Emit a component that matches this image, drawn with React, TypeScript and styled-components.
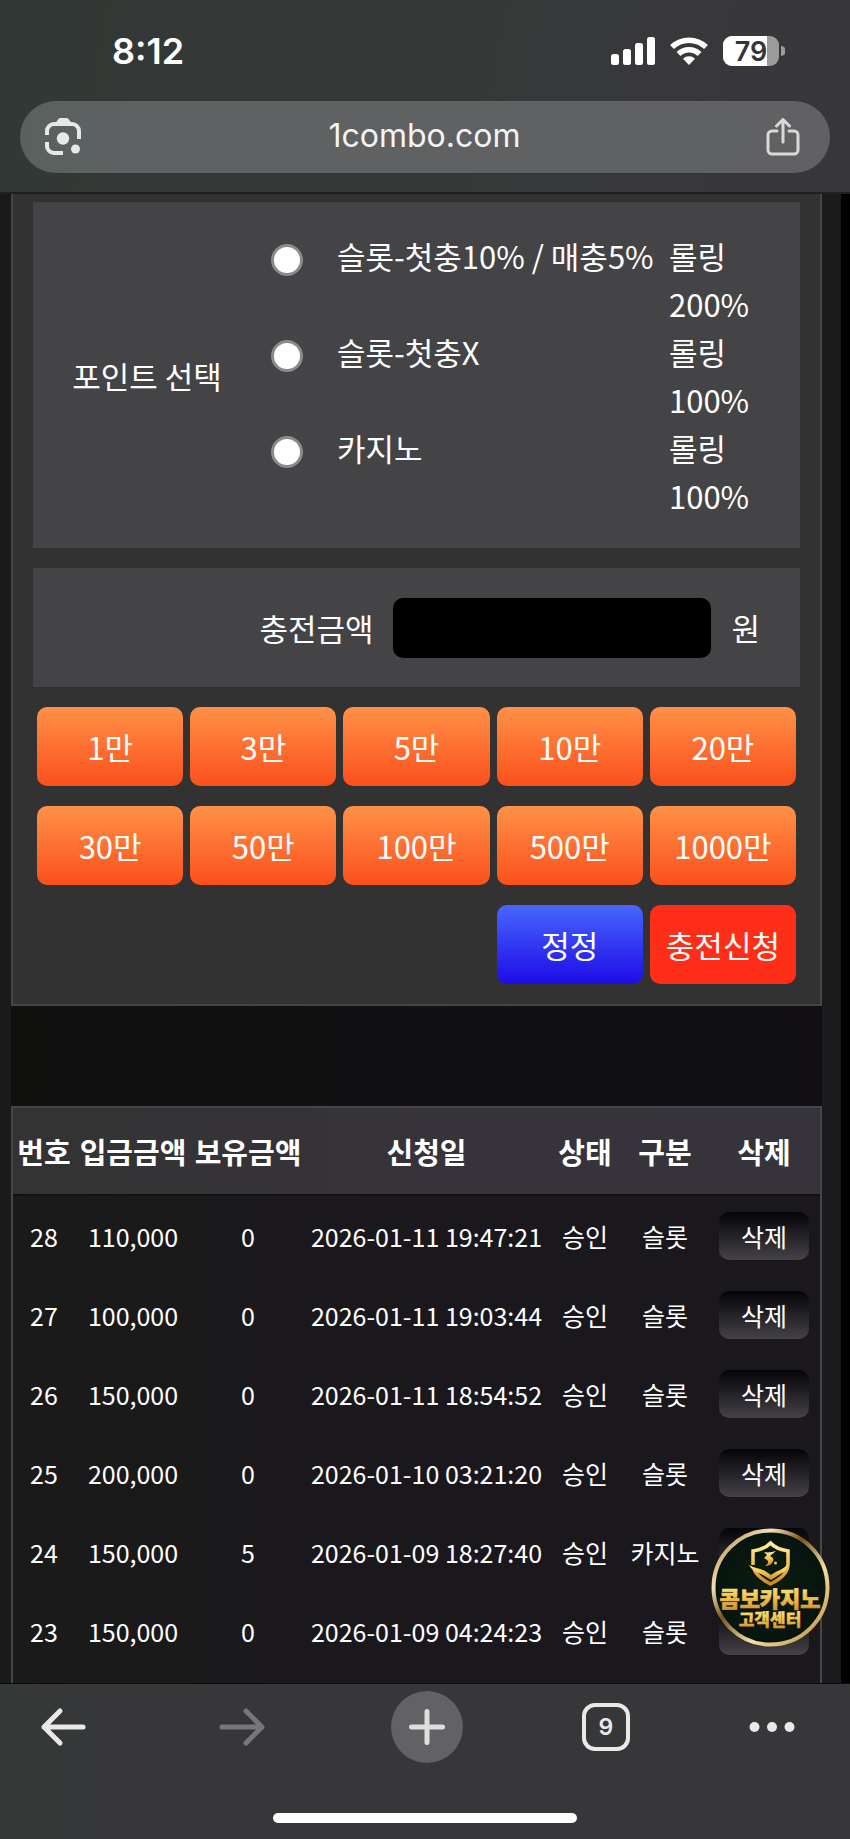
import React, { useState } from "react";
import styled, { createGlobalStyle } from "styled-components";

const KR = `"Noto Sans CJK KR", "Noto Sans", sans-serif`;
const UI = `Inter, "Noto Sans CJK KR", sans-serif`;

const GlobalStyle = createGlobalStyle`
  *, *::before, *::after { box-sizing: border-box; }
  body { margin: 0; background: #000; color: #fff; font-family: ${KR}; }
  button, input { font: inherit; color: inherit; }
  button { border: 0; padding: 0; background: none; cursor: pointer; }
`;

const Screen = styled.div`
  display: flex;
  flex-direction: column;
  height: 100vh;
  overflow: hidden;
`;

const Chrome = styled.header`
  flex: none;
  padding: 0 20px 19px;
  background: linear-gradient(100deg, #323835 0%, #353837 35%, #38383a 75%, #373739 100%);
  border-bottom: 2px solid #1f2020;
`;

const StatusBar = styled.div`
  display: flex;
  align-items: center;
  justify-content: space-between;
  height: 101px;
  padding: 0 45px 0 92px;
`;

const Clock = styled.time`
  font: 600 36px/40px ${UI};
`;

const StatusIcons = styled.div`
  display: flex;
  align-items: center;
  gap: 15px;
`;

const AddressBar = styled.div`
  display: flex;
  align-items: center;
  justify-content: space-between;
  height: 72px;
  padding: 0 30px 0 25px;
  border-radius: 36px;
  background: linear-gradient(90deg, #59615f 0%, #5f6163 14%, #616163 100%);
`;

const Address = styled.a`
  padding-bottom: 2px;
  font: 400 32px/40px ${UI};
  color: #f4f4f4;
  text-decoration: none;
`;

const IconButton = styled.button`
  display: flex;
  align-items: center;
  justify-content: center;
`;

const Viewport = styled.main`
  flex: 1;
  min-height: 0;
  overflow: hidden;
  margin-right: 9px;
  padding: 0 19px 0 11px;
  background: linear-gradient(90deg, #1a1a1a, #1b1b1d);
`;

const Page = styled.div`
  background: linear-gradient(90deg, #10100f, #110f14);
`;

const DepositForm = styled.form`
  display: flex;
  flex-direction: column;
  gap: 20px;
  padding: 8px 20px 20px;
  border: 2px solid #464648;
  border-top: 0;
  background: #323233;
  font-size: 31px;
  line-height: 48px;
`;

const PointBox = styled.fieldset`
  display: grid;
  grid-template-columns: 228px 1fr;
  align-items: center;
  margin: 0;
  padding: 30px 39px 28px 0;
  border: 0;
  background: #444446;
`;

const PointTitle = styled.div`
  text-align: center;
`;

const PointOptions = styled.div`
  display: flex;
  flex-direction: column;
`;

const PointOption = styled.label`
  display: grid;
  grid-template-columns: 76px 1fr 92px;
  align-items: start;
`;

const Radio = styled.input`
  appearance: none;
  width: 32px;
  height: 32px;
  margin: 12px 10px;
  border: 3px solid #8b8b8d;
  border-radius: 50%;
  background: #fff;
  &:checked { border: 9px solid #2b6cf6; }
`;

const AmountBox = styled.div`
  display: flex;
  align-items: center;
  justify-content: flex-end;
  gap: 20px;
  height: 119px;
  padding-right: 40px;
  background: #444446;
`;

const AmountInput = styled.input`
  width: 318px;
  height: 60px;
  padding: 0 16px;
  border: 0;
  border-radius: 10px;
  background: #000;
  text-align: right;
`;

const ButtonGrid = styled.div`
  display: grid;
  grid-template-columns: repeat(5, 1fr);
  gap: 20px 7px;
  padding: 0 4px;
`;

const fills = {
  amount: "linear-gradient(#ff9147, #fb501c)",
  reset: "linear-gradient(#4866fc, #1d0ce6)",
  submit: "#ff2e18",
};

const FormButton = styled.button<{ $kind: keyof typeof fills }>`
  height: 79px;
  border-radius: 10px;
  background: ${(p) => fills[p.$kind]};
  white-space: nowrap;
  ${(p) => p.$kind === "reset" && "grid-column: 4;"}
`;

const History = styled.table`
  width: 100%;
  margin-top: 100px;
  border: 2px solid #464648;
  border-collapse: separate;
  border-spacing: 0;
  table-layout: fixed;
  background: linear-gradient(90deg, #1a1a19, #1b181d 50%);
  font-size: 25px;
  line-height: 36px;
  text-align: center;
  white-space: nowrap;
`;

const HeadCell = styled.th`
  height: 88px;
  padding: 0;
  border-bottom: 2px solid #111012;
  font-size: 29px;
  font-weight: 700;
`;

const HeadRow = styled.tr`
  background: linear-gradient(90deg, #333333, #37333a 50%);
`;

const Cell = styled.td`
  height: 79px;
  padding: 0;
`;

const DeleteButton = styled.button`
  display: block;
  width: 90px;
  height: 48px;
  margin: 0 auto;
  border-radius: 10px;
  background: linear-gradient(#040307, #444246);
`;

const Toolbar = styled.nav`
  position: relative;
  flex: none;
  padding: 7px 55px 16px 32px;
  border-top: 1px solid #0c0c0c;
  background: linear-gradient(90deg, #343936, #373739 12%);
`;

const ToolbarButtons = styled.div`
  display: flex;
  align-items: center;
  justify-content: space-between;
  height: 72px;
`;

const NewTab = styled(IconButton)`
  width: 72px;
  height: 72px;
  border-radius: 50%;
  background: #626264;
`;

const TabCount = styled(IconButton)`
  width: 48px;
  height: 48px;
  border: 4px solid #e9e9ea;
  border-radius: 13px;
  font: 600 23px/28px ${UI};
  color: #e9e9ea;
`;

const HomeBar = styled.div`
  display: flex;
  justify-content: center;
  margin: 50px -55px 0 -32px;
`;

const HomeIndicator = styled.div`
  width: 304px;
  height: 10px;
  border-radius: 5px;
  background: #fff;
`;

const SupportBadge = styled.a`
  position: absolute;
  right: 20px;
  bottom: 192px;
  width: 119px;
  height: 119px;
  svg { display: block; }
`;

const amounts = ["1만", "3만", "5만", "10만", "20만", "30만", "50만", "100만", "500만", "1000만"];

const options = [
  { name: "슬롯-첫충10% / 매충5%", rate: "200%" },
  { name: "슬롯-첫충X", rate: "100%" },
  { name: "카지노", rate: "100%" },
];

const columns = [
  { label: "번호", width: 62 },
  { label: "입금금액", width: 116 },
  { label: "보유금액", width: 114 },
  { label: "신청일", width: 243 },
  { label: "상태", width: 74 },
  { label: "구분", width: 86 },
  { label: "삭제", width: 112 },
];

const rows = [
  ["28", "110,000", "0", "2026-01-11 19:47:21", "승인", "슬롯"],
  ["27", "100,000", "0", "2026-01-11 19:03:44", "승인", "슬롯"],
  ["26", "150,000", "0", "2026-01-11 18:54:52", "승인", "슬롯"],
  ["25", "200,000", "0", "2026-01-10 03:21:20", "승인", "슬롯"],
  ["24", "150,000", "5", "2026-01-09 18:27:40", "승인", "카지노"],
  ["23", "150,000", "0", "2026-01-09 04:24:23", "승인", "슬롯"],
];

const SignalIcon = () => (
  <svg width="44" height="28" viewBox="0 0 44 28" fill="#fff" aria-hidden="true">
    <rect x="0" y="17" width="8" height="11" rx="2.5" />
    <rect x="12" y="12" width="8" height="16" rx="2.5" />
    <rect x="24" y="6" width="8" height="22" rx="2.5" />
    <rect x="36" y="0" width="8" height="28" rx="2.5" />
  </svg>
);

const WifiIcon = () => (
  <svg width="38" height="28" viewBox="0 0 38 28" aria-hidden="true">
    <g fill="none" stroke="#fff" strokeWidth="5.500">
      <path d="M2 10a24.500 24.500 0 0 1 34 0" />
      <path d="M8.500 17a15 15 0 0 1 21 0" />
    </g>
    <path d="M19 28l-6-6.300a8.500 8.500 0 0 1 12 0z" fill="#fff" />
  </svg>
);

const BatteryIcon = () => (
  <svg width="62" height="30" viewBox="0 0 62 30" aria-hidden="true">
    <defs>
      <clipPath id="cell"><rect width="56" height="30" rx="9" /></clipPath>
    </defs>
    <g clipPath="url(#cell)">
      <rect width="56" height="30" fill="#9b9b9c" />
      <rect width="44" height="30" fill="#fff" />
    </g>
    <path d="M58 10a5 5 0 0 1 0 10z" fill="#9b9b9c" />
    <text x="28" y="25" textAnchor="middle" fontFamily="Inter, sans-serif" fontWeight="600" fontSize="27" fill="#343636">79</text>
  </svg>
);

const LensIcon = () => (
  <svg width="38" height="38" viewBox="0 0 38 38" aria-hidden="true">
    <g fill="none" stroke="#e6e9e8" strokeWidth="4">
      <path d="M2 17v-4a7 7 0 0 1 7-7h18a7 7 0 0 1 7 7v8" />
      <path d="M2 24v4a7 7 0 0 0 7 7h9" />
    </g>
    <path d="M10 6l3-4.500a3 3 0 0 1 2.500-1.500h6a3 3 0 0 1 2.500 1.500l3 4.500z" fill="#e6e9e8" />
    <circle cx="18" cy="20.500" r="6.200" fill="#e6e9e8" />
    <circle cx="30.500" cy="31" r="4.500" fill="#e6e9e8" />
  </svg>
);

const ShareIcon = () => (
  <svg width="34" height="38" viewBox="0 0 34 38" fill="none" stroke="#d9d9da" strokeWidth="3" strokeLinecap="round" strokeLinejoin="round" aria-hidden="true">
    <path d="M11 13H6a4 4 0 0 0-4 4v15a4 4 0 0 0 4 4h22a4 4 0 0 0 4-4V17a4 4 0 0 0-4-4h-5" />
    <path d="M17 24V2M10.500 8L17 1.500 23.500 8" />
  </svg>
);

const ArrowIcon = ({ color, flip }: { color: string; flip?: boolean }) => (
  <svg width="60" height="44" viewBox="0 0 60 44" fill="none" stroke={color} strokeWidth="5" strokeLinecap="round" strokeLinejoin="round" aria-hidden="true">
    <path d={flip ? "M11 22H51M35 6L51 22L35 38" : "M51 22H12M28 6L12 22L28 38"} />
  </svg>
);

const PlusIcon = () => (
  <svg width="36" height="36" viewBox="0 0 36 36" stroke="#dededf" strokeWidth="5" strokeLinecap="round" aria-hidden="true">
    <path d="M2.500 18H33.500M18 2.500V33.500" />
  </svg>
);

const DotsIcon = () => (
  <svg width="46" height="12" viewBox="0 0 46 12" fill="#e9e9ea" aria-hidden="true">
    <circle cx="5.500" cy="6" r="5" />
    <circle cx="23" cy="6" r="5" />
    <circle cx="40.500" cy="6" r="5" />
  </svg>
);

const SupportLogo = () => (
  <svg width="119" height="119" viewBox="0 0 119 119" aria-hidden="true">
    <defs>
      <linearGradient id="ring" x1="0" y1="0" x2="1" y2="1">
        <stop offset="0" stopColor="#a37a35" />
        <stop offset=".25" stopColor="#f1e2b4" />
        <stop offset=".42" stopColor="#7b551f" />
        <stop offset=".65" stopColor="#f3dfa0" />
        <stop offset="1" stopColor="#b8872f" />
      </linearGradient>
      <radialGradient id="felt">
        <stop offset="0" stopColor="#0d1c12" />
        <stop offset="1" stopColor="#06140e" />
      </radialGradient>
      <linearGradient id="gold" x1="0" y1="0" x2="0" y2="1">
        <stop offset="0" stopColor="#fff0a0" />
        <stop offset=".5" stopColor="#f3c64e" />
        <stop offset="1" stopColor="#c9872a" />
      </linearGradient>
    </defs>
    <circle cx="59.500" cy="59.500" r="57" fill="url(#felt)" stroke="url(#ring)" strokeWidth="4" />
    <g fill="none" stroke="url(#gold)" strokeWidth="3.500" strokeLinejoin="miter">
      <path d="M42 37V23c7-1 13-3 17.500-8C64 20 70 22 77 23v13c0 9-7 15-17.500 20C50 51 45 47 43 41" />
    </g>
    <path d="M38 37c6 4 13 3 19 8l3 2 3-2c5-3 10-4 14-9-1 6-3 8-6 9l-11 7-10-6c-6-2-9-4-12-9z" fill="url(#gold)" />
    <path d="M53 24c4 1 8 0 12-1l-6 5c3 1 4 3 3 5-1 3-4 5-8 5 3-2 4-4 2-6l-3-2 3-3z" fill="url(#gold)" />
    <circle cx="64.500" cy="35" r="1.500" fill="#f3c64e" />
    <g textAnchor="middle" fontFamily='"Noto Sans CJK KR", sans-serif' fontWeight="900" fill="url(#gold)" stroke="url(#gold)">
      <text x="59" y="79" fontSize="22" strokeWidth=".6">콤보카지노</text>
      <text x="59" y="98" fontSize="17" strokeWidth=".3">고객센터</text>
    </g>
  </svg>
);

export default function App() {
  const [amount, setAmount] = useState("");

  return (
    <Screen>
      <GlobalStyle />
      <Chrome>
        <StatusBar>
          <Clock>8:12</Clock>
          <StatusIcons>
            <SignalIcon />
            <WifiIcon />
            <BatteryIcon />
          </StatusIcons>
        </StatusBar>
        <AddressBar>
          <IconButton type="button" aria-label="Lens"><LensIcon /></IconButton>
          <Address href="#">1combo.com</Address>
          <IconButton type="button" aria-label="Share"><ShareIcon /></IconButton>
        </AddressBar>
      </Chrome>

      <Viewport>
        <Page>
          <DepositForm onSubmit={(e) => e.preventDefault()}>
            <PointBox aria-labelledby="point-title">
              <PointTitle id="point-title">포인트 선택</PointTitle>
              <PointOptions>
                {options.map((o) => (
                  <PointOption key={o.name}>
                    <Radio type="radio" name="point" value={o.name} />
                    <span>{o.name}</span>
                    <span>롤링 {o.rate}</span>
                  </PointOption>
                ))}
              </PointOptions>
            </PointBox>
            <AmountBox>
              <label htmlFor="amount">충전금액</label>
              <AmountInput id="amount" value={amount} onChange={(e) => setAmount(e.target.value)} />
              <span>원</span>
            </AmountBox>
            <ButtonGrid>
              {amounts.map((a) => (
                <FormButton key={a} type="button" $kind="amount" onClick={() => setAmount(`${parseInt(a, 10)}0000`)}>
                  {a}
                </FormButton>
              ))}
              <FormButton type="button" $kind="reset" onClick={() => setAmount("")}>정정</FormButton>
              <FormButton type="submit" $kind="submit">충전신청</FormButton>
            </ButtonGrid>
          </DepositForm>

          <History>
            <colgroup>
              {columns.map((c) => <col key={c.label} width={c.width} />)}
            </colgroup>
            <thead>
              <HeadRow>
                {columns.map((c) => <HeadCell key={c.label} scope="col">{c.label}</HeadCell>)}
              </HeadRow>
            </thead>
            <tbody>
              {rows.map((r) => (
                <tr key={r[0]}>
                  {r.map((v, i) => <Cell key={i}>{v}</Cell>)}
                  <Cell><DeleteButton type="button">삭제</DeleteButton></Cell>
                </tr>
              ))}
              <tr><Cell colSpan={7} /></tr>
            </tbody>
          </History>
        </Page>
      </Viewport>

      <Toolbar>
        <ToolbarButtons>
          <IconButton type="button" aria-label="Back"><ArrowIcon color="#e9e9ea" /></IconButton>
          <IconButton type="button" aria-label="Forward" disabled><ArrowIcon color="#77777a" flip /></IconButton>
          <NewTab type="button" aria-label="New tab"><PlusIcon /></NewTab>
          <TabCount type="button">9</TabCount>
          <IconButton type="button" aria-label="More"><DotsIcon /></IconButton>
        </ToolbarButtons>
        <HomeBar><HomeIndicator /></HomeBar>
        <SupportBadge href="#" aria-label="고객센터"><SupportLogo /></SupportBadge>
      </Toolbar>
    </Screen>
  );
}
